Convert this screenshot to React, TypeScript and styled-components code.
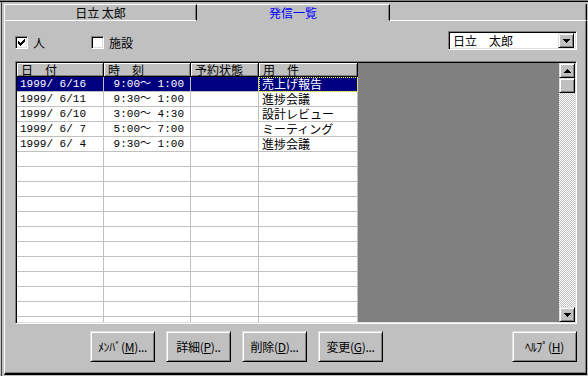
import React from "react";
import styled, { createGlobalStyle } from "styled-components";

const GlobalStyle = createGlobalStyle`
  html, body {
    margin: 0;
    padding: 0;
    background: #c0c0c0;
  }
  body {
    font-family: "Noto Sans CJK JP", "MS Gothic", sans-serif;
    font-size: 12px;
    color: #000;
  }
`;

const Window = styled.div`
  width: 588px;
  height: 376px;
  box-sizing: border-box;
  padding: 4px 1px 1px 4px;
  background: #c0c0c0;
  box-shadow: inset 0 1px 0 #808080, inset 0 2px 0 #000, inset 1px 0 0 #c0c0c0,
    inset 2px 0 0 #404040;
  display: flex;
  flex-direction: column;
`;

const TabRow = styled.div`
  display: flex;
  height: 17px;
`;

const Tab = styled.div<{ $active?: boolean; $first?: boolean }>`
  width: 193px;
  box-sizing: border-box;
  border-top: 1px solid #fff;
  border-left: ${(p) => (p.$first ? "1px solid #fff" : "none")};
  border-right: 1px solid #000;
  border-bottom: 1px solid ${(p) => (p.$active ? "#c0c0c0" : "#fff")};
  box-shadow: inset -1px 0 0 #808080;
  display: flex;
  align-items: center;
  justify-content: center;
  color: ${(p) => (p.$active ? "#0000ff" : "#000")};
  line-height: 14px;
  white-space: pre;
`;

const TabFiller = styled.div`
  flex: 1;
  box-sizing: border-box;
  border-bottom: 1px solid #fff;
  border-right: 1px solid #000;
  box-shadow: inset -1px 0 0 #808080;
`;

const Panel = styled.div`
  flex: 1;
  box-sizing: border-box;
  border-left: 1px solid #fff;
  border-right: 1px solid #000;
  border-bottom: 2px solid #000;
  box-shadow: inset -1px 0 0 #808080, inset 0 -1px 0 #808080;
  padding: 10px 9px 10px 10px;
  display: flex;
  flex-direction: column;
`;

const TopRow = styled.div`
  display: flex;
  height: 19px;
`;

const CheckItem = styled.label`
  display: flex;
  align-items: center;
  gap: 5px;
  margin-top: 5px;
  height: 13px;
  margin-right: ${(p: { $gap?: number }) => p.$gap ?? 0}px;
`;

const CheckBox = styled.span`
  width: 13px;
  height: 13px;
  box-sizing: border-box;
  background: #fff;
  border-top: 1px solid #808080;
  border-left: 1px solid #808080;
  border-right: 1px solid #fff;
  border-bottom: 1px solid #fff;
  box-shadow: inset 1px 1px 0 #000, inset -1px -1px 0 #dfdfdf;
  display: flex;
  align-items: center;
  justify-content: center;
`;

const CheckText = styled.span`
  line-height: 13px;
`;

const Combo = styled.div`
  margin-left: auto;
  width: 129px;
  height: 19px;
  box-sizing: border-box;
  background: #fff;
  border-top: 1px solid #808080;
  border-left: 1px solid #808080;
  border-right: 1px solid #fff;
  border-bottom: 1px solid #fff;
  box-shadow: inset 1px 1px 0 #000, inset -1px -1px 0 #dfdfdf;
  padding: 2px 2px 2px 4px;
  display: flex;
  align-items: center;
`;

const ComboText = styled.span`
  flex: 1;
  line-height: 13px;
  white-space: pre;
`;

const RaisedButton = styled.div`
  box-sizing: border-box;
  background: #c0c0c0;
  border-top: 1px solid #dfdfdf;
  border-left: 1px solid #dfdfdf;
  border-right: 1px solid #000;
  border-bottom: 1px solid #000;
  box-shadow: inset 1px 1px 0 #fff, inset -1px -1px 0 #808080;
  display: flex;
  align-items: center;
  justify-content: center;
`;

const ComboButton = styled(RaisedButton)`
  width: 16px;
  height: 15px;
`;

const ListBox = styled.div`
  margin-top: 11px;
  height: 263px;
  box-sizing: border-box;
  border-top: 1px solid #808080;
  border-left: 1px solid #808080;
  border-right: 1px solid #fff;
  border-bottom: 1px solid #fff;
  box-shadow: inset 1px 1px 0 #000, inset -1px -1px 0 #dfdfdf;
  padding: 1px;
  display: flex;
`;

const GridArea = styled.div`
  flex: 1;
  display: flex;
  background: #808080;
  overflow: hidden;
`;

const Table = styled.div`
  width: 341px;
  display: flex;
  flex-direction: column;
  background: #fff;
  overflow: hidden;
`;

const columns = "87px 87px 68px 99px";

const HeaderRow = styled.div`
  display: grid;
  grid-template-columns: ${columns};
  height: 14px;
  flex-shrink: 0;
`;

const HeaderCell = styled.div`
  box-sizing: border-box;
  background: #c0c0c0;
  border-right: 1px solid #000;
  border-bottom: 1px solid #000;
  box-shadow: inset 1px 1px 0 #fff, inset -1px -1px 0 #808080;
  padding-left: 4px;
  line-height: 13px;
  white-space: pre;
`;

const Row = styled.div`
  display: grid;
  grid-template-columns: ${columns};
  height: 15px;
  flex-shrink: 0;
`;

const Cell = styled.div<{ $mono?: boolean; $selected?: boolean; $focus?: boolean }>`
  box-sizing: border-box;
  border-right: 1px solid #c0c0c0;
  border-bottom: 1px solid #c0c0c0;
  padding-left: 3px;
  height: 15px;
  line-height: 14px;
  white-space: pre;
  overflow: hidden;
  font-family: ${(p) =>
    p.$mono
      ? `"Liberation Mono", "Noto Sans CJK JP", monospace`
      : `"Noto Sans CJK JP", sans-serif`};
  font-size: ${(p) => (p.$mono ? "11px" : "12px")};
  background: ${(p) => (p.$selected ? "#000080" : "#fff")};
  color: ${(p) => (p.$selected ? "#fff" : "#000")};
  outline: ${(p) => (p.$focus ? "1px dotted #ffff00" : "none")};
  outline-offset: -1px;
`;

const ScrollBar = styled.div`
  width: 16px;
  display: flex;
  flex-direction: column;
`;

const ScrollButton = styled(RaisedButton)`
  height: 15px;
  flex-shrink: 0;
`;

const ScrollTrack = styled.div`
  flex: 1;
  background: repeating-conic-gradient(#c0c0c0 0 25%, #fff 0 50%) 0 0 / 2px 2px;
`;

const ButtonRow = styled.div`
  display: flex;
  margin-top: 7px;
  padding-left: 75px;
  gap: 11px;
`;

const PushButton = styled(RaisedButton)<{ $push?: boolean }>`
  width: 65px;
  height: 31px;
  margin-left: ${(p) => (p.$push ? "auto" : "0")};
  white-space: pre;
  letter-spacing: -0.3px;
`;

const Key = styled.span`
  text-decoration: underline;
`;

const check = ["......X", ".....XX", "X...XXX", "XX.XXX.", "XXXXX..", ".XXX...", "..X...."];

const CheckMark = () => (
  <svg width="7" height="7" viewBox="0 0 7 7" shapeRendering="crispEdges">
    {check.flatMap((line, y) =>
      line.split("").map((c, x) => (c === "X" ? <rect key={`${x}-${y}`} x={x} y={y} width="1" height="1" fill="#000" /> : null))
    )}
  </svg>
);

const Arrow = ({ up }: { up?: boolean }) => (
  <svg width="7" height="4" viewBox="0 0 7 4" shapeRendering="crispEdges">
    <path d={up ? "M3 0h1v1h1v1h1v1h1v1H0V3h1V2h1V1h1z" : "M0 0h7v1H6v1H5v1H4v1H3V3H2V2H1V1H0z"} fill="#000" />
  </svg>
);

type Entry = { date: string; time: string; status: string; subject: string };

const entries: Entry[] = [
  { date: "1999/ 6/16", time: " 9:00～ 1:00", status: "", subject: "売上げ報告" },
  { date: "1999/ 6/11", time: " 9:30～ 1:00", status: "", subject: "進捗会議" },
  { date: "1999/ 6/10", time: " 3:00～ 4:30", status: "", subject: "設計レビュー" },
  { date: "1999/ 6/ 7", time: " 5:00～ 7:00", status: "", subject: "ミーティング" },
  { date: "1999/ 6/ 4", time: " 9:30～ 1:00", status: "", subject: "進捗会議" },
];

const blanks: Entry[] = Array.from({ length: 12 }, () => ({ date: "", time: "", status: "", subject: "" }));

const App: React.FC = () => {
  return (
    <Window>
      <GlobalStyle />
      <TabRow>
        <Tab $first>日立 太郎</Tab>
        <Tab $active>発信一覧</Tab>
        <TabFiller />
      </TabRow>
      <Panel>
        <TopRow>
          <CheckItem $gap={46}>
            <CheckBox>
              <CheckMark />
            </CheckBox>
            <CheckText>人</CheckText>
          </CheckItem>
          <CheckItem>
            <CheckBox />
            <CheckText>施設</CheckText>
          </CheckItem>
          <Combo>
            <ComboText>日立　太郎</ComboText>
            <ComboButton>
              <Arrow />
            </ComboButton>
          </Combo>
        </TopRow>

        <ListBox>
          <GridArea>
            <Table>
              <HeaderRow>
                <HeaderCell>日　付</HeaderCell>
                <HeaderCell>時　刻</HeaderCell>
                <HeaderCell>予約状態</HeaderCell>
                <HeaderCell>用　件</HeaderCell>
              </HeaderRow>
              {[...entries, ...blanks].map((e, i) => {
                const sel = i === 0;
                return (
                  <Row key={i}>
                    <Cell $mono $selected={sel}>{e.date}</Cell>
                    <Cell $mono $selected={sel}>{e.time}</Cell>
                    <Cell $selected={sel}>{e.status}</Cell>
                    <Cell $selected={sel} $focus={sel}>{e.subject}</Cell>
                  </Row>
                );
              })}
            </Table>
          </GridArea>
          <ScrollBar>
            <ScrollButton>
              <Arrow up />
            </ScrollButton>
            <ScrollButton />
            <ScrollTrack />
            <ScrollButton>
              <Arrow />
            </ScrollButton>
          </ScrollBar>
        </ListBox>

        <ButtonRow>
          <PushButton>
            ﾒﾝﾊﾞ(<Key>M</Key>)...
          </PushButton>
          <PushButton>
            詳細(<Key>P</Key>)..
          </PushButton>
          <PushButton>
            削除(<Key>D</Key>)...
          </PushButton>
          <PushButton>
            変更(<Key>G</Key>)...
          </PushButton>
          <PushButton $push>
            ﾍﾙﾌﾟ(<Key>H</Key>)
          </PushButton>
        </ButtonRow>
      </Panel>
    </Window>
  );
};

export default App;
